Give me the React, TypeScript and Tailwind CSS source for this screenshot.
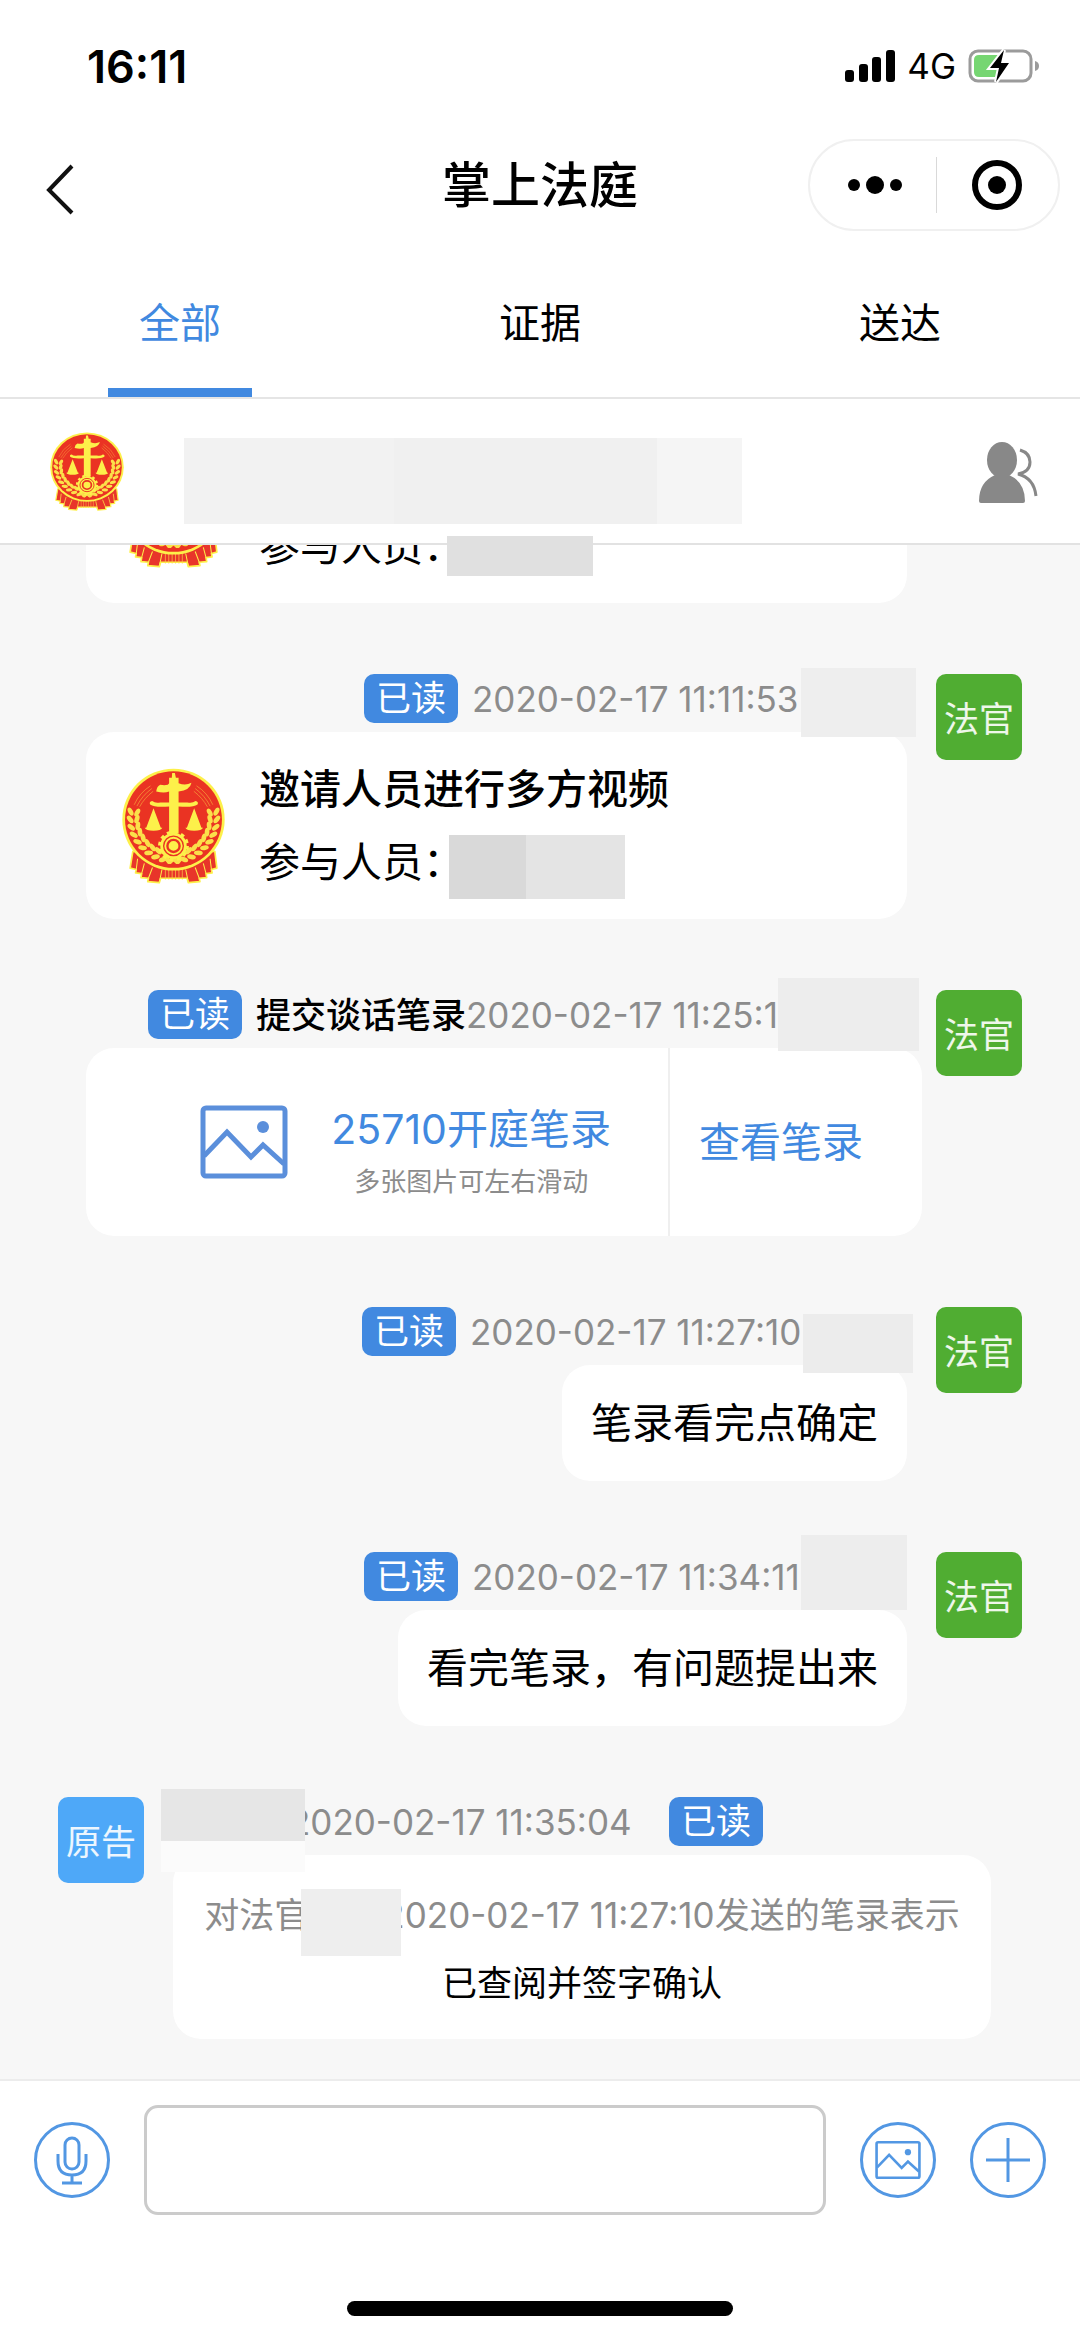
import { useState, type ReactNode } from "react";
import clsx from "clsx";

const TABS = ["全部", "证据", "送达"];

function arcGrains(side: 1 | -1) {
  const grains: { x: number; y: number; rot: number; key: string }[] = [];
  for (let i = 0; i < 11; i++) {
    const deg = 188 - i * 10.5;
    const rad = (deg * Math.PI) / 180;
    for (const r of [108, 128]) {
      grains.push({
        x: 218 + side * Math.cos(rad) * r,
        y: 200 + Math.sin(rad) * r,
        rot: side * (deg - 188) + side * (r === 108 ? 28 : -28),
        key: `${i}-${r}`,
      });
    }
  }
  return grains;
}

/** Court emblem: huabiao column, scales, gear and wheat on a red disc. */
function CourtEmblem({ className }: { className?: string }) {
  return (
    <svg viewBox="66 53 304 344" preserveAspectRatio="none" className={className} role="img" aria-label="法院徽章">
      <g fill="#e8352a" stroke="#fdf04a" strokeWidth="5" strokeLinejoin="round">
        <path d="M98 300 L90 350 L108 354 L106 364 L124 366 L122 378 L144 380 L142 390 L176 393 L180 380 H258 L262 393 L296 390 L294 380 L316 378 L314 366 L332 364 L330 354 L346 350 L340 300 Z" />
        <path d="M112 322 L108 354 M132 336 L124 366 M156 348 L144 380 M184 354 L176 393 M326 322 L330 354 M306 336 L314 366 M282 348 L294 380 M254 354 L262 393" strokeWidth="3" />
      </g>
      <path d="M194 352V384M204 352V384M214 352V384M224 352V384M234 352V384M244 352V384" stroke="#fdd048" strokeWidth="2" />
      <circle cx="218" cy="206" r="151" fill="#fdf04a" />
      <circle cx="218" cy="206" r="143" fill="#ea3323" />
      <g fill="none" stroke="#f7a33c" strokeWidth="2">
        <path d="M102 162Q118 126 150 106M110 166Q126 134 154 114M118 168Q132 142 158 122M334 162Q318 126 286 106M326 166Q310 134 282 114M318 168Q304 142 278 122" />
      </g>
      {/* wheat starts below the rays and meets under the gear */}
      <g fill="#fbe04a">
        {([1, -1] as const).map((side) =>
          arcGrains(side).map((g) => (
            <ellipse key={`${side}${g.key}`} cx={g.x} cy={g.y} rx="7" ry="13" transform={`rotate(${g.rot} ${g.x} ${g.y})`} />
          )),
        )}
      </g>
      <g fill="#fdf04a">
        <path d="M214 68h8l3 14h8v16q20 8 38-1q-4 22-38 26v32h26q14 4 24-4q10 2 6 10q-14 10-56 6v80h-28v-80q-42 4-56-6q-4-8 6-10q10 8 24 4h26v-32q-14 6-38 0q2-16 12-20q12 2 22 0q4-4 4-5V82h8z" />
        <path d="M159 172L181 232H137z M279 172L301 232H257z" />
        <path d="M133 230H185Q182 239 159 239T133 230z M253 230H305Q302 239 279 239T253 230z" />
        <circle cx="218" cy="284" r="39" />
      </g>
      <circle cx="218" cy="284" r="41" fill="none" stroke="#fdf04a" strokeWidth="9" strokeDasharray="11 10.5" />
      <circle cx="218" cy="284" r="29" fill="none" stroke="#ea3323" strokeWidth="4" />
      <circle cx="218" cy="284" r="18" fill="none" stroke="#ea3323" strokeWidth="7" />
    </svg>
  );
}

function StatusBar() {
  return (
    <div className="flex h-[132px] items-center justify-between pr-10 pl-[87px]">
      <span className="text-[45px] leading-none font-semibold">16:11</span>
      <div className="flex items-center gap-3">
        <svg viewBox="0 0 50 32" className="h-8 w-[50px]" aria-hidden>
          <rect x="0" y="20" width="9" height="12" rx="3" />
          <rect x="14" y="14" width="9" height="18" rx="3" />
          <rect x="27" y="7" width="9" height="25" rx="3" />
          <rect x="41" y="0" width="9" height="32" rx="3" />
        </svg>
        <span className="text-[35px] leading-none">4G</span>
        <svg viewBox="0 0 72 36" className="h-9 w-[72px]" aria-hidden>
          <rect x="2" y="3" width="61" height="30" rx="8" fill="none" stroke="#9b9b9b" strokeWidth="3" />
          <path d="M11 7H32V29H11Q6 29 6 24V12Q6 7 11 7Z" fill="#76d672" />
          <path d="M67 13Q71 14 71 18T67 23Z" fill="#9b9b9b" />
          <path d="M36 2L22 20H31L28 34L41 15H33Z" stroke="#fff" strokeWidth="4" paintOrder="stroke" />
        </svg>
      </div>
    </div>
  );
}

function NavBar() {
  return (
    <div className="grid h-[106px] grid-cols-[1fr_auto_1fr] items-center px-5">
      <button type="button" aria-label="返回" className="justify-self-start pt-2 pl-5">
        <svg viewBox="0 0 40 52" className="h-[52px] w-10" fill="none" stroke="#111" strokeWidth="4">
          <path d="M32 3L9 27L32 50" />
        </svg>
      </button>
      <h1 className="text-[49px] leading-none font-medium">掌上法庭</h1>
      <div className="flex h-[92px] w-[252px] items-center justify-self-end rounded-full border-2 border-[#f0f0f0]">
        <button type="button" aria-label="更多" className="flex flex-1 items-center justify-center pl-1">
          <svg viewBox="0 0 56 20" className="h-5 w-14">
            <circle cx="7" cy="10" r="6" />
            <circle cx="28" cy="10" r="9" />
            <circle cx="49" cy="10" r="6" />
          </svg>
        </button>
        <span className="h-14 w-px bg-[#d9d9d9]" />
        <button type="button" aria-label="关闭" className="flex flex-1 items-center justify-center">
          <svg viewBox="0 0 52 52" className="size-[52px]">
            <circle cx="26" cy="26" r="22" fill="none" stroke="#000" strokeWidth="6" />
            <circle cx="26" cy="26" r="9" />
          </svg>
        </button>
      </div>
    </div>
  );
}

function PictureIcon({ className, stroke }: { className?: string; stroke: number }) {
  return (
    <svg viewBox="0 0 88 74" className={className} fill="none" stroke="currentColor" strokeWidth={stroke} aria-hidden>
      <rect x="3" y="3" width="82" height="68" rx="3" />
      <path d="M4 51L27 27L51 52L63 40L84 59" />
      <circle cx="63" cy="22" r="6" fill="currentColor" stroke="none" />
    </svg>
  );
}

function ReadTag() {
  return (
    <span className="flex h-[49px] w-[94px] shrink-0 items-center justify-center rounded-[10px] bg-[#4189e0] text-[35px] leading-none text-white">
      已读
    </span>
  );
}

function Avatar({ label, className }: { label: string; className: string }) {
  return (
    <span
      className={clsx(
        "flex size-[86px] shrink-0 items-center justify-center rounded-[10px] pt-1 text-[35px] leading-none text-white/90",
        className,
      )}
    >
      {label}
    </span>
  );
}

/** Grey block that hides a personal name. */
function Mask({ className }: { className: string }) {
  return <span aria-hidden className={clsx("absolute block", className)} />;
}

function JudgeMessage({
  time,
  subject,
  metaClass,
  maskClass,
  wide,
  children,
}: {
  time: string;
  subject?: string;
  metaClass: string;
  maskClass: string;
  wide?: boolean;
  children: ReactNode;
}) {
  return (
    <article className={clsx("flex items-start pr-[58px] pl-[86px]", wide ? "gap-[14px]" : "gap-[29px]")}>
      <div className="relative flex min-w-0 flex-1 flex-col items-end gap-[9px]">
        <div className="flex h-[49px] items-center gap-[14px]">
          <ReadTag />
          <p className={clsx("flex items-center pt-[2px] text-[35px] leading-none whitespace-nowrap text-[#8c8c8c]", metaClass)}>
            {subject && <strong className="font-medium text-black">{subject}</strong>}
            <time>{time}</time>
          </p>
        </div>
        {children}
        <Mask className={maskClass} />
      </div>
      <Avatar label="法官" className="bg-[#50ad32]" />
    </article>
  );
}

function VideoInviteCard({ maskClass, children }: { maskClass: string; children?: ReactNode }) {
  return (
    <div className="flex h-[187px] w-full items-center gap-[34px] rounded-[28px] bg-white pl-9">
      <CourtEmblem className="h-[116px] w-[103px] shrink-0" />
      <div className="flex flex-col gap-[13px]">
        <h2 className="text-[41px] leading-[60px] font-medium">邀请人员进行多方视频</h2>
        <p className="relative text-[41px] leading-[60px]">
          参与人员：
          <span aria-hidden className={clsx("absolute z-20 flex", maskClass)}>
            {children}
          </span>
        </p>
      </div>
    </div>
  );
}

function TextBubble({ children }: { children: ReactNode }) {
  return <p className="rounded-[28px] bg-white px-[29px] py-7 text-[41px] leading-[60px]">{children}</p>;
}

function RoundButton({ label, children }: { label: string; children: ReactNode }) {
  return (
    <button
      type="button"
      aria-label={label}
      className="flex size-[76px] shrink-0 items-center justify-center rounded-full border-[3px] border-[#5297e3] text-[#5297e3]"
    >
      {children}
    </button>
  );
}

export default function App() {
  const [tab, setTab] = useState(TABS[0]);
  const [draft, setDraft] = useState("");

  return (
    <div className="flex h-screen flex-col overflow-hidden bg-[#f7f7f7] font-[Inter,'Noto_Sans_CJK_SC',sans-serif] text-black">
      <header className="relative z-10 shrink-0 bg-white">
        <StatusBar />
        <NavBar />
        <nav className="grid h-[161px] grid-cols-3 border-b-2 border-[#e5e5e5]">
          {TABS.map((name) => (
            <button
              key={name}
              type="button"
              onClick={() => setTab(name)}
              className={clsx("flex flex-col items-center justify-between text-[41px]", tab === name && "text-[#4189e0]")}
            >
              <span className="pt-[55px] leading-[60px]">{name}</span>
              <span className={clsx("h-[9px] w-[144px]", tab === name && "bg-[#4189e0]")} />
            </button>
          ))}
        </nav>
        <div className="flex h-[146px] items-center border-b-2 border-[#e2e2e2] pr-[42px] pl-[50px]">
          <CourtEmblem className="h-[79px] w-[74px] shrink-0" />
          <div aria-hidden className="mt-5 ml-[60px] flex h-[86px] w-[558px]">
            <span className="flex-[210] bg-[#f2f2f2]" />
            <span className="flex-[263] bg-[#f0f0f0]" />
            <span className="flex-[85] bg-[#f5f5f5]" />
          </div>
          <button type="button" aria-label="参与人员" className="ml-auto pt-1">
            <svg viewBox="0 0 60 62" className="h-[62px] w-[60px]" fill="#888">
              <ellipse cx="24" cy="18" rx="15" ry="18" />
              <path d="M17 30H31V33Q47 40 47 59Q47 61 45 61H3Q1 61 1 59Q1 40 17 33Z" />
              <path d="M42 8Q52 11 52 20Q52 30 40 32Q56 36 58 54" fill="none" stroke="#888" strokeWidth="3" />
            </svg>
          </button>
        </div>
      </header>

      <main className="flex min-h-0 flex-1 flex-col justify-end gap-[71px] pb-10">
        <JudgeMessage time="2020-02-17 11:06:20" metaClass="w-[435px]" maskClass="hidden">
          <VideoInviteCard maskClass="top-5 left-[188px] h-10 w-[146px]">
            <span className="flex-1 bg-[#e0e0e0]" />
          </VideoInviteCard>
        </JudgeMessage>

        <JudgeMessage
          time="2020-02-17 11:11:53"
          metaClass="w-[435px]"
          maskClass="top-[-6px] right-[-9px] h-[69px] w-[115px] bg-[#eeeeee]"
        >
          <VideoInviteCard maskClass="top-[3px] left-[190px] h-16 w-[176px]">
            <span className="flex-[77] bg-[#d9d9d9]" />
            <span className="flex-[99] bg-[#e4e4e4]" />
          </VideoInviteCard>
        </JudgeMessage>

        <JudgeMessage
          wide
          subject="提交谈话笔录"
          time="2020-02-17 11:25:12"
          metaClass="w-[666px]"
          maskClass="top-[-12px] right-[3px] h-[73px] w-[141px] bg-[#ededed]"
        >
          <div className="flex h-[188px] w-full rounded-[28px] bg-white text-[#4189e0]">
            <div className="flex flex-1 items-center justify-end gap-[43px] border-r-2 border-[#efefef] pr-[57px]">
              <PictureIcon stroke={5} className="h-[74px] w-[88px] text-[#5b8fdb]" />
              <div className="pt-5 text-center">
                <h2 className="text-[41px] leading-[60px]">25710开庭笔录</h2>
                <p className="text-[26px] leading-[46px] text-[#8c8c8c]">多张图片可左右滑动</p>
              </div>
            </div>
            <a href="#record" className="flex w-[252px] items-center pl-[29px] text-[41px] leading-[60px]">
              查看笔录
            </a>
          </div>
        </JudgeMessage>

        <JudgeMessage
          time="2020-02-17 11:27:10"
          metaClass="w-[437px]"
          maskClass="top-[7px] right-[-6px] h-[59px] w-[110px] bg-[#ececec]"
        >
          <TextBubble>笔录看完点确定</TextBubble>
        </JudgeMessage>

        <JudgeMessage
          time="2020-02-17 11:34:11"
          metaClass="w-[435px]"
          maskClass="top-[-17px] right-0 h-[75px] w-[106px] bg-[#ededed]"
        >
          <TextBubble>看完笔录，有问题提出来</TextBubble>
        </JudgeMessage>

        <article className="flex items-start gap-[29px] pr-[89px] pl-[58px]">
          <Avatar label="原告" className="bg-[#4ea8f8]" />
          <div className="relative flex min-w-0 flex-1 flex-col gap-[9px]">
            <div className="flex h-[49px] items-center pl-[116px]">
              <time className="w-[380px] pt-[2px] text-[35px] leading-none whitespace-nowrap text-[#8c8c8c]">
                2020-02-17 11:35:04
              </time>
              <ReadTag />
            </div>
            <div className="flex h-[184px] flex-col items-center justify-center gap-[18px] rounded-[28px] bg-white pt-1 text-[35px] leading-[50px]">
              <p className="flex text-[#8c8c8c]">
                对法官
                <span className="relative w-[74px]">
                  <Mask className="top-[-1px] left-[-8px] h-[67px] w-[100px] bg-[#eeeeee]" />
                </span>
                2020-02-17 11:27:10发送的笔录表示
              </p>
              <p>已查阅并签字确认</p>
            </div>
            <Mask className="top-[-8px] left-[-12px] h-[83px] w-[144px] border-b-[31px] border-[#fbfbfb] bg-[#e6e6e6]" />
          </div>
        </article>
      </main>

      <footer className="relative shrink-0 border-t-2 border-[#ececec] bg-white">
        <form className="flex items-center gap-[34px] px-[34px] pt-6" onSubmit={(e) => e.preventDefault()}>
          <RoundButton label="语音">
            <svg viewBox="0 0 32 50" className="h-[50px] w-8" fill="none" stroke="currentColor" strokeWidth="3">
              <rect x="9" y="3" width="14" height="31" rx="7" />
              <path d="M2 19V26Q2 40 16 40T30 26V19M16 40V47M6 48H26" />
            </svg>
          </RoundButton>
          <input
            aria-label="消息"
            value={draft}
            onChange={(e) => setDraft(e.target.value)}
            className="h-[110px] min-w-0 flex-1 rounded-[14px] border-[3px] border-[#cbcbcb] bg-white px-6 text-[41px] outline-none"
          />
          <RoundButton label="图片">
            <PictureIcon stroke={5} className="h-10 w-[46px]" />
          </RoundButton>
          <RoundButton label="更多功能">
            <svg viewBox="0 0 44 44" className="size-11" fill="none" stroke="currentColor" strokeWidth="3">
              <path d="M22 0V44M0 22H44" />
            </svg>
          </RoundButton>
        </form>
        <div className="flex justify-center pt-[86px] pb-[23px]">
          <span className="h-[15px] w-[386px] rounded-full bg-black" />
        </div>
      </footer>
    </div>
  );
}
